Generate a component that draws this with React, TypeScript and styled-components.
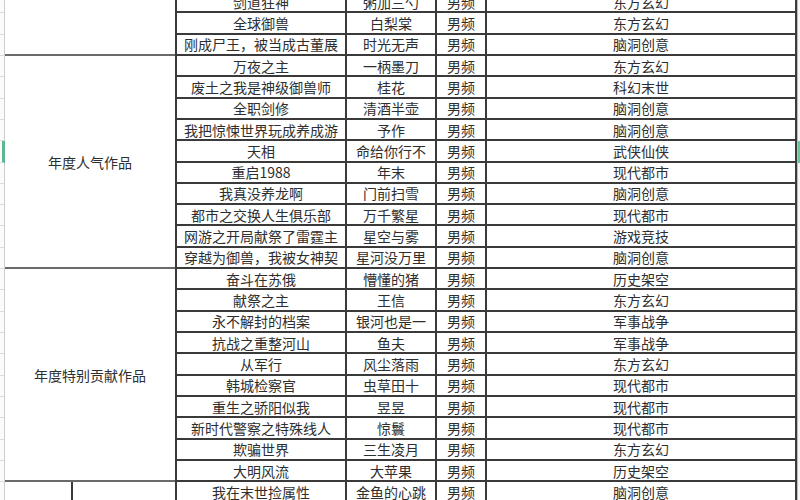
import * as React from 'react';
import styled, { createGlobalStyle } from 'styled-components';

type Book = [string, string, string, string];

interface Group {
  label: string;
  books: Book[];
  split?: boolean;
}

// row index (in the whole sheet) that is selected in the row header
const ACTIVE_ROW = 7;

const groups: Group[] = [
  {
    label: '',
    books: [
      ['剑道狂神', '粥加三勺', '男频', '东方玄幻'],
      ['全球御兽', '白梨棠', '男频', '东方玄幻'],
      ['刚成尸王，被当成古董展', '时光无声', '男频', '脑洞创意'],
    ],
  },
  {
    label: '年度人气作品',
    books: [
      ['万夜之主', '一柄墨刀', '男频', '东方玄幻'],
      ['废土之我是神级御兽师', '桂花', '男频', '科幻末世'],
      ['全职剑修', '清酒半壶', '男频', '脑洞创意'],
      ['我把惊悚世界玩成养成游', '予作', '男频', '脑洞创意'],
      ['天相', '命给你行不', '男频', '武侠仙侠'],
      ['重启1988', '年末', '男频', '现代都市'],
      ['我真没养龙啊', '门前扫雪', '男频', '脑洞创意'],
      ['都市之交换人生俱乐部', '万千繁星', '男频', '现代都市'],
      ['网游之开局献祭了雷霆主', '星空与雾', '男频', '游戏竞技'],
      ['穿越为御兽，我被女神契', '星河没万里', '男频', '脑洞创意'],
    ],
  },
  {
    label: '年度特别贡献作品',
    books: [
      ['奋斗在苏俄', '懵懂的猪', '男频', '历史架空'],
      ['献祭之主', '王信', '男频', '东方玄幻'],
      ['永不解封的档案', '银河也是一', '男频', '军事战争'],
      ['抗战之重整河山', '鱼夫', '男频', '军事战争'],
      ['从军行', '风尘落雨', '男频', '东方玄幻'],
      ['韩城检察官', '虫草田十', '男频', '现代都市'],
      ['重生之骄阳似我', '昱昱', '男频', '现代都市'],
      ['新时代警察之特殊线人', '惊鬟', '男频', '现代都市'],
      ['欺骗世界', '三生凌月', '男频', '东方玄幻'],
      ['大明风流', '大苹果', '男频', '历史架空'],
    ],
  },
  {
    label: '',
    split: true,
    books: [
      ['我在末世捡属性', '金鱼的心跳', '男频', '脑洞创意'],
      ['', '', '', ''],
    ],
  },
];

export default function App() {
  let rowIndex = 0;
  return (
    <>
      <GlobalStyle />
      <Sheet>
        {groups.map((group, gi) =>
          group.books.map((book, bi) => {
            const active = rowIndex === ACTIVE_ROW;
            rowIndex++;
            return (
              <React.Fragment key={`${gi}-${bi}`}>
                <RowHead $active={active} />
                {bi === 0 && !group.split && (
                  <GroupCell $span={group.books.length}>{group.label}</GroupCell>
                )}
                {bi === 0 && group.split && (
                  <>
                    <SubCell $col={2} $span={group.books.length} $divider />
                    <SubCell $col={3} $span={group.books.length} />
                  </>
                )}
                <DataCell $col={4} $first>{book[0]}</DataCell>
                <DataCell $col={5}>{book[1]}</DataCell>
                <DataCell $col={6}>{book[2]}</DataCell>
                <DataCell $col={7}>{book[3]}</DataCell>
                <Trail $active={active} />
              </React.Fragment>
            );
          })
        )}
      </Sheet>
    </>
  );
}

const GlobalStyle = createGlobalStyle`
  html, body {
    margin: 0;
    padding: 0;
    background: #ffffff;
  }
  body {
    font-family: "Noto Sans CJK SC", "Noto Sans", sans-serif;
  }
  #root {
    width: 800px;
    height: 500px;
    overflow: hidden;
  }
`;

const Sheet = styled.div`
  display: grid;
  grid-template-columns: 5px 68px 102px 172px 90px 50px 310px 3px;
  grid-auto-rows: 21.32px;
  margin-top: -8px;
  font-size: 14px;
  color: #2e2e2e;
`;

const Cell = styled.div`
  box-sizing: border-box;
  display: flex;
  align-items: center;
  justify-content: center;
  white-space: nowrap;
  overflow: hidden;
  line-height: 1;
  background: #ffffff;
`;

const RowHead = styled(Cell)<{ $active?: boolean }>`
  grid-column: 1;
  background: #fbfbfb;
  border-bottom: 1px solid #dcdcdc;
  border-right: ${p => (p.$active ? '3px solid #5cb88c' : '1px solid #cdcdcd')};
`;

const GroupCell = styled(Cell)<{ $span: number }>`
  grid-column: 2 / span 2;
  grid-row: span ${p => p.$span};
  border-bottom: 2px solid #6a6a6a;
`;

const SubCell = styled(Cell)<{ $col: number; $span: number; $divider?: boolean }>`
  grid-column: ${p => p.$col};
  grid-row: span ${p => p.$span};
  border-right: ${p => (p.$divider ? '2px solid #3a3a3a' : 'none')};
`;

const DataCell = styled(Cell)<{ $col: number; $first?: boolean }>`
  grid-column: ${p => p.$col};
  border-right: 2px solid #3a3a3a;
  border-bottom: 2px solid #3a3a3a;
  border-left: ${p => (p.$first ? '2px solid #3a3a3a' : 'none')};
`;

const Trail = styled(Cell)<{ $active?: boolean }>`
  grid-column: 8;
  background: ${p => (p.$active ? '#6cc49a' : '#f7f7f7')};
  border-left: 1px solid #bdbdbd;
`;
